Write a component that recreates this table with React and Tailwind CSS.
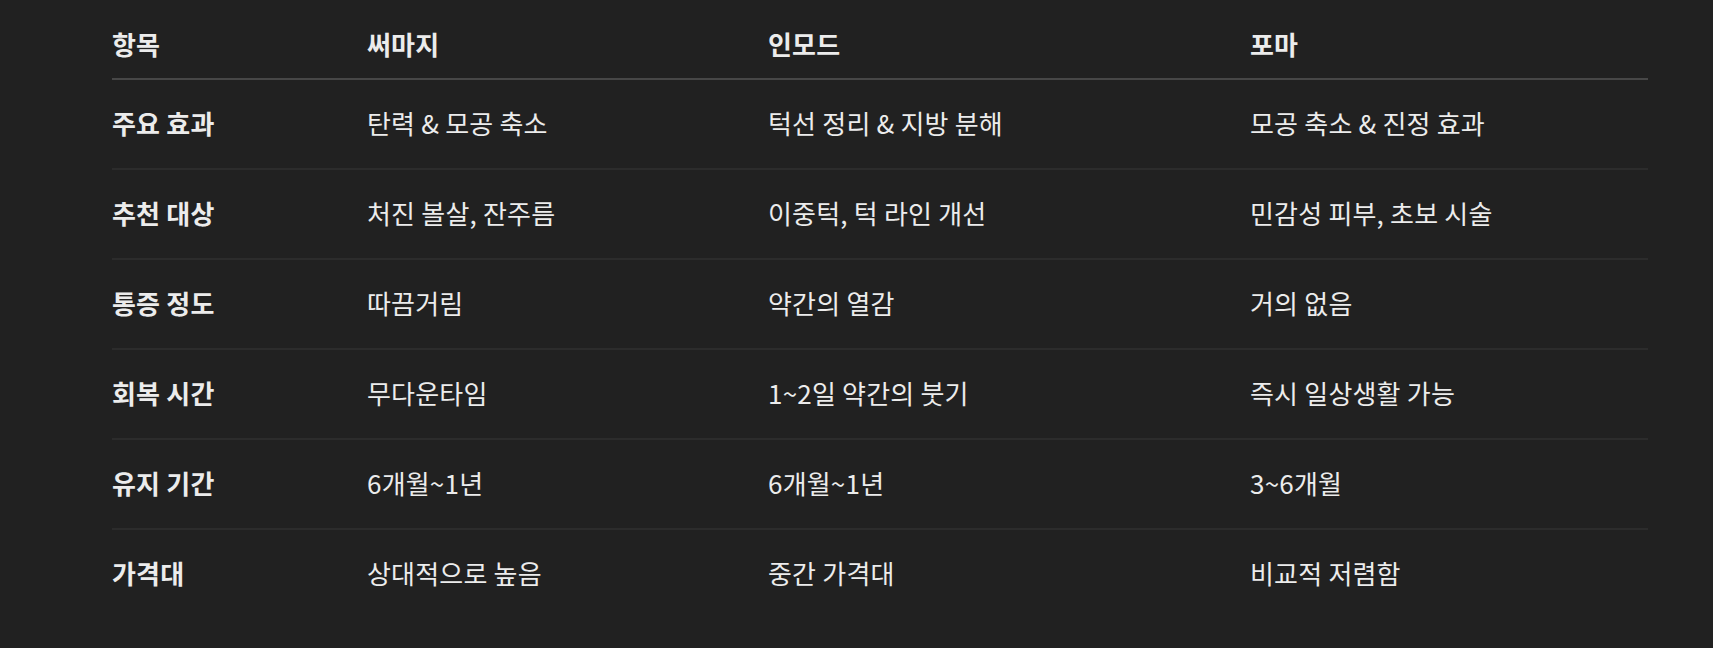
const headers = ['항목', '써마지', '인모드', '포마'];

const rows = [
  ['주요 효과', '탄력 & 모공 축소', '턱선 정리 & 지방 분해', '모공 축소 & 진정 효과'],
  ['추천 대상', '처진 볼살, 잔주름', '이중턱, 턱 라인 개선', '민감성 피부, 초보 시술'],
  ['통증 정도', '따끔거림', '약간의 열감', '거의 없음'],
  ['회복 시간', '무다운타임', '1~2일 약간의 붓기', '즉시 일상생활 가능'],
  ['유지 기간', '6개월~1년', '6개월~1년', '3~6개월'],
  ['가격대', '상대적으로 높음', '중간 가격대', '비교적 저렴함'],
];

const cols = 'grid grid-cols-[255px_401px_482px_398px]';

export default function App() {
  return (
    <div
      className="min-h-[648px] w-full bg-[#212121] text-[#ececec]"
      style={{ fontFamily: '"Noto Sans CJK KR", "Noto Sans", sans-serif' }}
    >
      <div className="ml-[112px] w-[1536px] text-[26px] leading-[36px] tracking-[0.2px]">
        <div className={`${cols} border-b-2 border-[#474747] pt-[26px] pb-[16px] font-semibold`}>
          {headers.map((h) => (
            <div key={h}>{h}</div>
          ))}
        </div>
        {rows.map((row, i) => (
          <div
            key={row[0]}
            className={`${cols} pt-[25px] pb-[27px] ${i < rows.length - 1 ? 'border-b-2 border-[#2c2c2c]' : ''}`}
          >
            {row.map((cell, j) => (
              <div key={j} className={j === 0 ? 'font-semibold' : ''}>
                {cell}
              </div>
            ))}
          </div>
        ))}
      </div>
    </div>
  );
}
